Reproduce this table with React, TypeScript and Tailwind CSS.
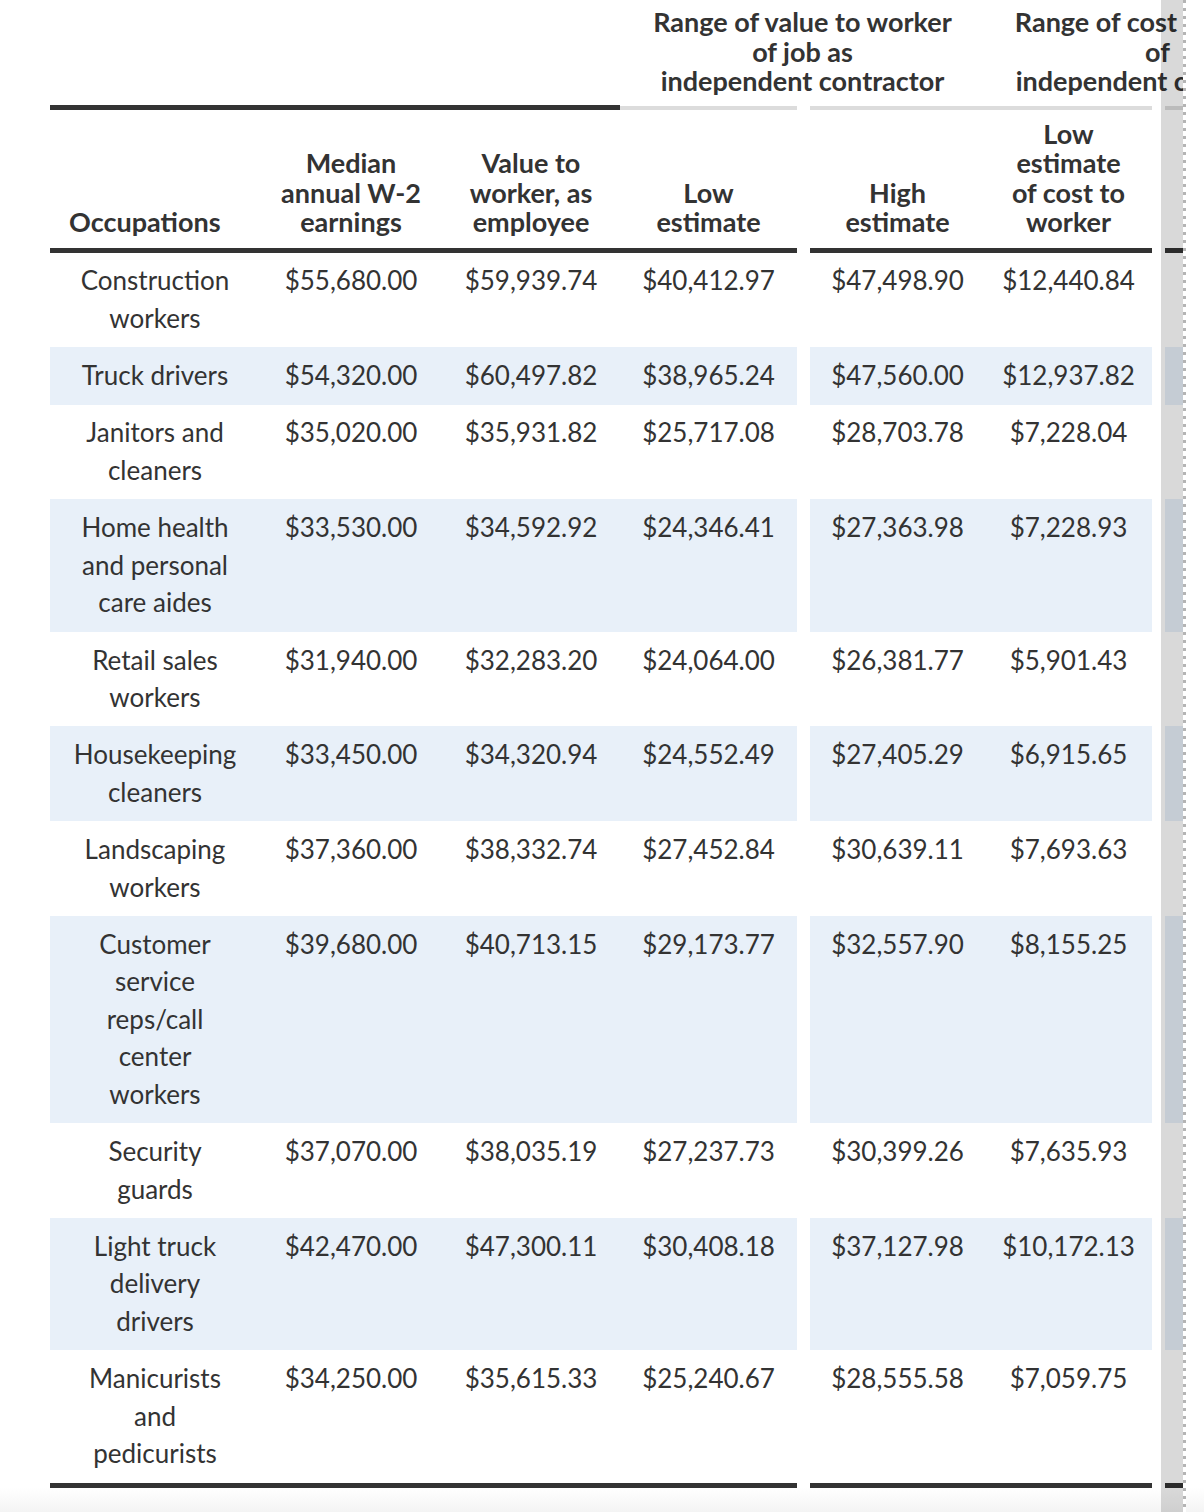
import React from "react";

type Row = { occ: string[]; vals: string[] };

const ROWS: Row[] = [
  { occ: ["Construction", "workers"], vals: ["$55,680.00", "$59,939.74", "$40,412.97", "$47,498.90", "$12,440.84"] },
  { occ: ["Truck drivers"], vals: ["$54,320.00", "$60,497.82", "$38,965.24", "$47,560.00", "$12,937.82"] },
  { occ: ["Janitors and", "cleaners"], vals: ["$35,020.00", "$35,931.82", "$25,717.08", "$28,703.78", "$7,228.04"] },
  { occ: ["Home health", "and personal", "care aides"], vals: ["$33,530.00", "$34,592.92", "$24,346.41", "$27,363.98", "$7,228.93"] },
  { occ: ["Retail sales", "workers"], vals: ["$31,940.00", "$32,283.20", "$24,064.00", "$26,381.77", "$5,901.43"] },
  { occ: ["Housekeeping", "cleaners"], vals: ["$33,450.00", "$34,320.94", "$24,552.49", "$27,405.29", "$6,915.65"] },
  { occ: ["Landscaping", "workers"], vals: ["$37,360.00", "$38,332.74", "$27,452.84", "$30,639.11", "$7,693.63"] },
  { occ: ["Customer", "service", "reps/call", "center", "workers"], vals: ["$39,680.00", "$40,713.15", "$29,173.77", "$32,557.90", "$8,155.25"] },
  { occ: ["Security", "guards"], vals: ["$37,070.00", "$38,035.19", "$27,237.73", "$30,399.26", "$7,635.93"] },
  { occ: ["Light truck", "delivery", "drivers"], vals: ["$42,470.00", "$47,300.11", "$30,408.18", "$37,127.98", "$10,172.13"] },
  { occ: ["Manicurists", "and", "pedicurists"], vals: ["$34,250.00", "$35,615.33", "$25,240.67", "$28,555.58", "$7,059.75"] },
];

// col1..col4 | gap | col5 col6 | gap | col7 (cut off by the scroll edge)
const GRID = "grid grid-cols-[210px_182px_178px_177px_13px_175px_167px_13px_165px]";

function Lines({ lines }: { lines: string[] }) {
  return (
    <>
      {lines.map((l, i) => (
        <div key={i} className="whitespace-nowrap">
          {l}
        </div>
      ))}
    </>
  );
}

function Rule({ dark }: { dark: boolean[] }) {
  // dark[i] for the 7 real columns; gaps stay white
  const cells: React.ReactNode[] = [];
  dark.forEach((d, i) => {
    cells.push(
      <div key={i} className="flex items-end h-[5px]">
        <div className={d ? "w-full h-[5px] bg-[#333333]" : "w-full h-[4px] bg-[#dcdcdc]"} />
      </div>
    );
    if (i === 3 || i === 5) cells.push(<div key={"g" + i} />);
  });
  return <div className={GRID}>{cells}</div>;
}

function BodyRow({ row, shaded }: { row: Row; shaded: boolean }) {
  const bg = shaded ? "bg-[#e8f0f9]" : "bg-white";
  const cell = `${bg} text-center py-[9.9px] leading-[37.5px]`;
  return (
    <div className={GRID}>
      <div className={cell}>
        <Lines lines={row.occ} />
      </div>
      <div className={cell}>{row.vals[0]}</div>
      <div className={cell}>{row.vals[1]}</div>
      <div className={cell}>{row.vals[2]}</div>
      <div />
      <div className={cell}>{row.vals[3]}</div>
      <div className={cell}>{row.vals[4]}</div>
      <div />
      <div className={cell} />
    </div>
  );
}

export default function App() {
  const head = "flex flex-col justify-end text-center font-bold text-[27px] leading-[29.5px] pt-[9px] pb-[11px]";
  return (
    <div
      className="relative w-[1204px] h-[1512px] flex bg-white text-[#333333] text-[26px] overflow-hidden"
      style={{ fontFamily: "Lato, 'Noto Sans', sans-serif" }}
    >
      {/* scrollable table area */}
      <div className="relative w-[1183px] h-full overflow-hidden">
        <div className="pl-[50px] w-[1330px]">
          {/* spanning headers */}
          <div className={`${GRID} font-bold text-[27px] leading-[29.5px] text-center`}>
            <div className="col-span-3" />
            <div className="col-span-3 pt-[7px] pb-[9px]">
              <div className="whitespace-nowrap">Range of value to worker</div>
              <div>of job as</div>
              <div className="whitespace-nowrap">independent contractor</div>
            </div>
            <div className="col-span-3 pt-[7px] pb-[9px]">
              <div className="whitespace-nowrap">Range of cost to worker</div>
              <div>of</div>
              <div className="whitespace-nowrap">independent contractor</div>
            </div>
          </div>

          <Rule dark={[true, true, true, false, false, false, false]} />

          {/* column headers */}
          <div className={GRID}>
            <div className={`${head} !text-left pl-[19px]`}>Occupations</div>
            <div className={head}>
              <Lines lines={["Median", "annual W-2", "earnings"]} />
            </div>
            <div className={head}>
              <Lines lines={["Value to", "worker, as", "employee"]} />
            </div>
            <div className={head}>
              <Lines lines={["Low", "estimate"]} />
            </div>
            <div />
            <div className={head}>
              <Lines lines={["High", "estimate"]} />
            </div>
            <div className={head}>
              <Lines lines={["Low", "estimate", "of cost to", "worker"]} />
            </div>
            <div />
            <div className={head} />
          </div>

          <Rule dark={[true, true, true, true, true, true, true]} />

          {ROWS.map((r, i) => (
            <BodyRow key={i} row={r} shaded={i % 2 === 1} />
          ))}

          <Rule dark={[true, true, true, true, true, true, true]} />
        </div>

        {/* faint floor below the table */}
        <div className="absolute left-0 right-0 bottom-0 h-[24px] bg-gradient-to-b from-white to-[#f4f4f4]" />

        {/* scroll-edge shade */}
        <div className="absolute top-0 bottom-0 right-0 w-[22px] bg-black/15" />
      </div>

      {/* dotted edge */}
      <div className="w-[3px] h-full bg-[repeating-linear-gradient(to_bottom,#b4b4b4_0px,#b4b4b4_3px,transparent_3px,transparent_8px)]" />
      <div className="flex-1 h-full flex flex-col justify-end">
        <div className="h-[24px] bg-gradient-to-b from-white to-[#f4f4f4]" />
      </div>
    </div>
  );
}
